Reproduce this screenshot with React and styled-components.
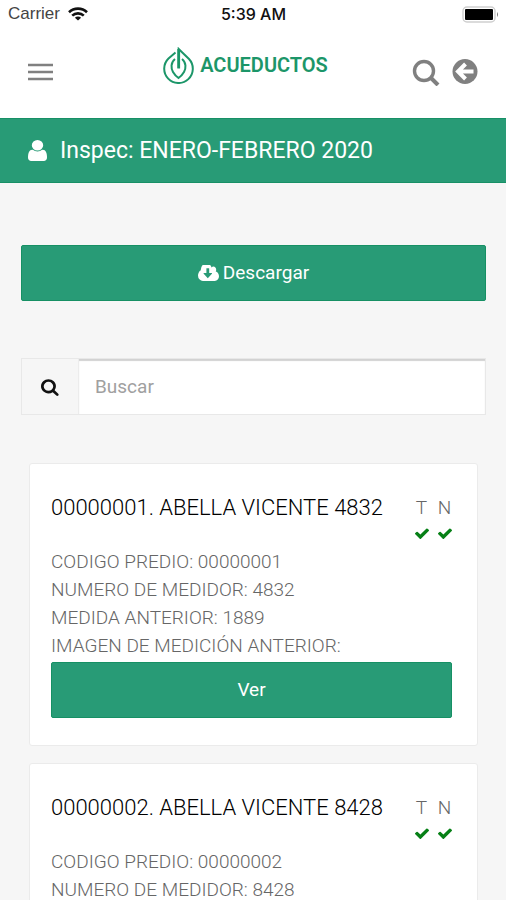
import React from 'react';
import styled, { createGlobalStyle } from 'styled-components';

const green = '#289b76';

const GlobalStyle = createGlobalStyle`
  * { box-sizing: border-box; }
  html { scrollbar-width: none; }
  body {
    margin: 0;
    background: #f6f6f6;
    color: #848484;
    font-family: Roboto, sans-serif;
    font-size: 19px;
    line-height: 28px;
  }
  button, input { font: inherit; }
`;

const Screen = styled.div`
  min-height: 100vh;
  padding-bottom: 24px;
`;

const StatusBar = styled.div`
  display: grid;
  grid-template-columns: 1fr auto 1fr;
  align-items: center;
  height: 28px;
  padding: 0 7px 0 8px;
  background: #fff;
  color: #111;
  font: 17px/28px "Liberation Sans", sans-serif;
`;

const Carrier = styled.div`
  display: flex;
  align-items: center;
  gap: 8px;
  color: #444;
`;

const Clock = styled.time`
  font: 500 16px/28px Inter, sans-serif;
`;

const BatterySlot = styled.div`
  display: flex;
  justify-content: flex-end;
`;

const Header = styled.header`
  display: flex;
  justify-content: space-between;
  height: 90px;
  padding: 18px 28px 0 28px;
  background: #fff;
`;

const IconButton = styled.button`
  display: flex;
  align-items: center;
  justify-content: center;
  height: 52px;
  padding: 0;
  border: 0;
  background: none;
  color: #808080;
`;

const Actions = styled.div`
  display: flex;
  align-items: center;
  gap: 12px;
  height: 52px;
`;

const Brand = styled.a`
  display: flex;
  align-items: center;
  gap: 6px;
  height: 38px;
  margin-left: 26px;
  color: #1c9669;
  font: 600 20px/38px Roboto, sans-serif;
  text-decoration: none;
`;

const Banner = styled.h1`
  display: flex;
  align-items: center;
  gap: 13px;
  height: 65px;
  margin: 0;
  padding: 0 28px;
  border: solid #179066;
  border-width: 1px 0;
  background: ${green};
  color: #fff;
  font-size: 23px;
  font-weight: 400;
`;

const Content = styled.main`
  padding: 62px 20px 0 21px;
`;

const ActionButton = styled.button`
  display: flex;
  align-items: center;
  justify-content: center;
  gap: 4px;
  width: 100%;
  height: 56px;
  padding: 0;
  border: 1px solid #169064;
  border-radius: 2px;
  background: ${green};
  color: #fff;
`;

const SearchField = styled.label`
  display: flex;
  height: 57px;
  margin-top: 57px;
  border: 1px solid #e8e8e8;
`;

const SearchAddon = styled.span`
  display: flex;
  align-items: center;
  justify-content: center;
  width: 57px;
  border-right: 1px solid #ececec;
  color: #111;
`;

const SearchInput = styled.input`
  flex: 1;
  min-width: 0;
  padding: 0 16px;
  border: 0;
  border-radius: 0;
  background: #fff;
  box-shadow: inset 0 2px 1px #d2d2d2;
  color: #444;
  outline: 0;
  &::placeholder { color: #a0a0a0; opacity: 1; }
`;

const CardList = styled.div`
  display: grid;
  gap: 17px;
  margin: 48px 8px 0;
`;

const Card = styled.article`
  padding: 28px 25px 27px 21px;
  border: 1px solid #ebebeb;
  border-radius: 3px;
  background: #fff;
`;

const CardTop = styled.div`
  display: flex;
  justify-content: space-between;
  align-items: flex-start;
  margin-bottom: 9px;
`;

const CardTitle = styled.h2`
  margin: 0;
  color: #000;
  font-size: 22px;
  font-weight: 300;
  line-height: 32px;
`;

const Flags = styled.div`
  display: flex;
  gap: 8px;
`;

const Flag = styled.div`
  display: flex;
  flex-direction: column;
  align-items: center;
  gap: 6px;
  width: 15px;
  padding-top: 2px;
  color: #666;
  font-weight: 300;
  svg { color: #078016; }
`;

const Details = styled.ul`
  margin: 0 0 2px;
  padding: 0;
  color: #666;
  font-weight: 300;
  list-style: none;
`;

const Glyph = styled.svg`
  display: block;
  flex: none;
`;

const glyphs = {
  search: ['64 0 1792 1792', 'M1216 832q0-185-131.5-316.5t-316.5-131.5-316.5 131.5-131.5 316.5 131.5 316.5 316.5 131.5 316.5-131.5 131.5-316.5zm512 832q0 52-38 90t-90 38q-54 0-90-38l-343-342q-179 124-399 124-143 0-273.5-55.5t-225-150-150-225-55.5-273.5 55.5-273.5 150-225 225-150 273.5-55.5 273.5 55.5 225 150 150 225 55.5 273.5q0 220-124 399l343 343q37 37 37 90z'],
  check: ['120 290 1552 1232', 'M1671 566q0 40-28 68l-724 724-136 136q-28 28-68 28t-68-28l-136-136-362-362q-28-28-28-68t28-68l136-136q28-28 68-28t68 28l294 295 656-657q28-28 68-28t68 28l136 136q28 28 28 68z'],
  user: ['256 128 1280 1536', 'M1536 1399q0 109-62.5 187t-150.5 78h-854q-88 0-150.5-78t-62.5-187q0-85 8.5-160.5t31.5-152 58.5-131 94-89 134.5-34.5q131 128 313 128t313-128q76 0 134.5 34.5t94 89 58.5 131 31.5 152 8.5 160.5zm-256-887q0 159-112.5 271.5t-271.5 112.5-271.5-112.5-112.5-271.5 112.5-271.5 271.5-112.5 271.5 112.5 112.5 271.5z'],
  download: ['-64 256 1920 1280', 'M1216 928q0-14-9-23t-23-9h-224v-352q0-13-9.5-22.5t-22.5-9.5h-192q-13 0-22.5 9.5t-9.5 22.5v352h-224q-13 0-22.5 9.5t-9.5 22.5q0 14 9 23l352 352q9 9 23 9t23-9l351-351q10-12 10-24zm640 224q0 159-112.5 271.5t-271.5 112.5h-1088q-185 0-316.5-131.5t-131.5-316.5q0-130 70-240t188-165q-2-30-2-43 0-212 150-362t362-150q156 0 285.5 87t188.5 231q71-62 166-62 106 0 181 75t75 181q0 76-41 138 130 31 213.5 135.5t83.5 238.5z'],
};

const Icon = ({ name, width, height }) => (
  <Glyph width={width} height={height} viewBox={glyphs[name][0]} fill="currentColor" preserveAspectRatio="none" aria-hidden="true">
    <path d={glyphs[name][1]} />
  </Glyph>
);

const Wifi = () => (
  <Glyph width="20" height="14" viewBox="0 0 20 14" fill="none" stroke="#111" strokeWidth="2.6" aria-hidden="true">
    <path d="M1 5.2C6 .4 14 .4 19 5.2M4.2 8.6c3.2-3 8.4-3 11.6 0" />
    <path d="M10 13.6 6.9 10.7c1.6-1.6 4.6-1.6 6.2 0z" fill="#111" stroke="none" />
  </Glyph>
);

const Battery = () => (
  <Glyph width="37" height="17" viewBox="0 0 37 17" aria-hidden="true">
    <rect x="1" y="1" width="32" height="15" rx="4" fill="#fff" stroke="#cfcfcf" strokeWidth="1.5" />
    <rect x="3" y="3" width="28" height="11" rx="1" fill="#000" />
    <path d="M35 6q2 2.500 0 5z" fill="#777" />
  </Glyph>
);

const Logo = () => (
  <Glyph width="31" height="37" viewBox="0 0 31 37" fill="none" stroke="currentColor" strokeWidth="2" aria-hidden="true">
    <path d="M12.500 5.500 5.500 11.500A14.300 14.300 0 1 0 26 12L15.700 2v19" />
    <path d="M12 12C7.500 15.500 8 21.500 10 25q2 3.500 5.500 6 3.500-2.500 5.500-6c2-3.500 2.500-9.500-2-13" />
    <path d="M15.700 2v19.500" strokeWidth="2.800" />
  </Glyph>
);

const readings = [
  { code: '00000001', name: 'ABELLA VICENTE', meter: '4832', previous: '1889' },
  { code: '00000002', name: 'ABELLA VICENTE', meter: '8428', previous: '1889' },
];

const ReadingCard = ({ code, name, meter, previous }) => (
  <Card>
    <CardTop>
      <CardTitle>{code}. {name} {meter}</CardTitle>
      <Flags>
        {['T', 'N'].map((flag) => (
          <Flag key={flag}>{flag}<Icon name="check" width={14} height={11} /></Flag>
        ))}
      </Flags>
    </CardTop>
    <Details>
      <li>CODIGO PREDIO: {code}</li>
      <li>NUMERO DE MEDIDOR: {meter}</li>
      <li>MEDIDA ANTERIOR: {previous}</li>
      <li>IMAGEN DE MEDICIÓN ANTERIOR:</li>
    </Details>
    <ActionButton type="button">Ver</ActionButton>
  </Card>
);

export default function App() {
  return (
    <Screen>
      <GlobalStyle />
      <StatusBar>
        <Carrier>Carrier <Wifi /></Carrier>
        <Clock>5:39 AM</Clock>
        <BatterySlot><Battery /></BatterySlot>
      </StatusBar>
      <Header>
        <IconButton type="button" aria-label="Menú">
          <Glyph width="25" height="18" viewBox="0 0 25 18" stroke="currentColor" strokeWidth="2.600" aria-hidden="true">
            <path d="M0 2h25M0 9h25M0 16h25" />
          </Glyph>
        </IconButton>
        <Brand href="#"><Logo />ACUEDUCTOS</Brand>
        <Actions>
          <IconButton type="button" aria-label="Buscar">
            <Glyph width="28" height="28" viewBox="0 0 28 28" fill="none" stroke="currentColor" strokeWidth="3.400" aria-hidden="true">
              <circle cx="12" cy="13" r="9.500" />
              <path d="m18.500 19.500 7.500 7.500" strokeWidth="4" />
            </Glyph>
          </IconButton>
          <IconButton type="button" aria-label="Volver">
            <Glyph width="26" height="26" viewBox="0 0 26 26" aria-hidden="true">
              <circle cx="13" cy="12.500" r="12.500" fill="currentColor" />
              <path d="M13.500 5 6 12.500l7.500 7.500M6.500 12.500h15" fill="none" stroke="#fff" strokeWidth="4" />
            </Glyph>
          </IconButton>
        </Actions>
      </Header>
      <Banner><Icon name="user" width={19} height={21} />Inspec: ENERO-FEBRERO 2020</Banner>
      <Content>
        <ActionButton type="button"><Icon name="download" width={21} height={16} />Descargar</ActionButton>
        <SearchField>
          <SearchAddon><Icon name="search" width={19} height={18} /></SearchAddon>
          <SearchInput type="search" placeholder="Buscar" aria-label="Buscar" />
        </SearchField>
        <CardList>
          {readings.map((reading) => <ReadingCard key={reading.code} {...reading} />)}
        </CardList>
      </Content>
    </Screen>
  );
}
